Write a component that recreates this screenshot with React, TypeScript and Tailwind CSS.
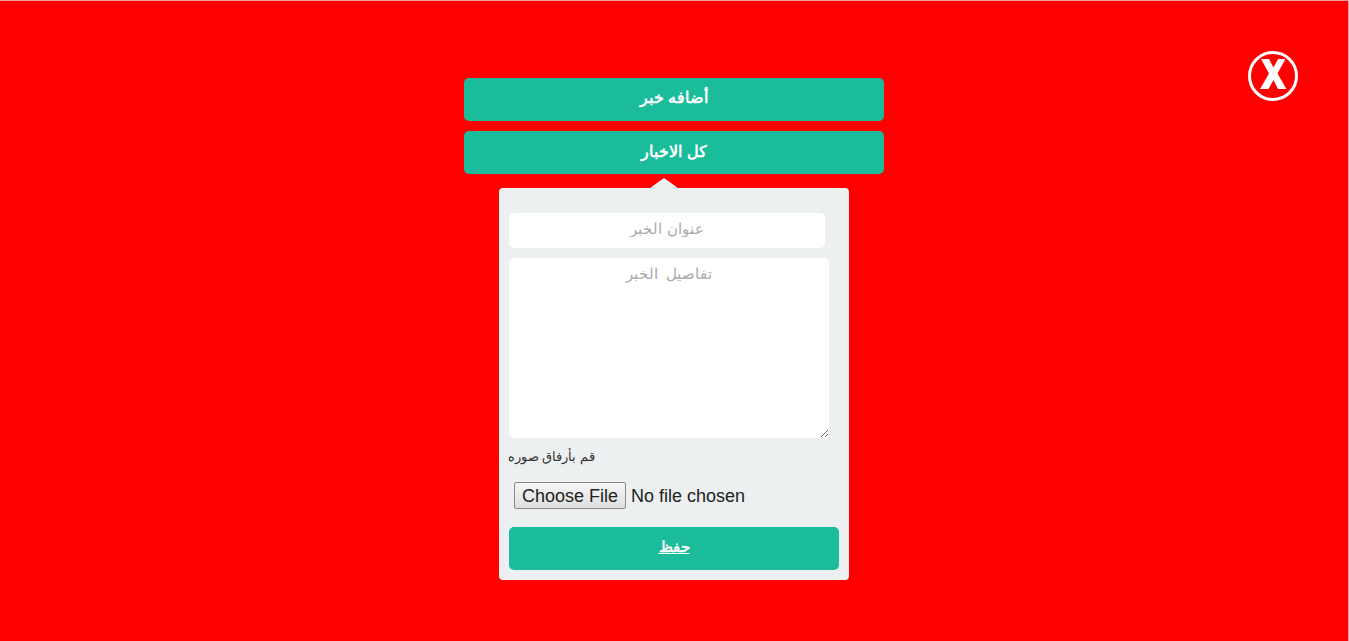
// Red overlay with the add-news form and the close button.
function CloseIcon() {
  return (
    <svg width="50" height="50" viewBox="0 0 50 50" fill="none">
      <circle cx="25" cy="25" r="23.5" stroke="#fff" strokeWidth="3" />
      <path d="M13 8H21L25.5 16.5L30 8H37.5L29.5 22.5L38.5 38H30L25.5 29L20.5 38H12L21 22.5Z" fill="#fff" />
    </svg>
  );
}

export default function App() {
  return (
    <div className="relative h-[641px] overflow-hidden bg-[#ff0000] border-t border-r border-[#f4a0a0] font-['Liberation_Sans',Arial,sans-serif]">
      <button className="absolute left-[1248px] top-[50px]">
        <CloseIcon />
      </button>

      <div className="mx-auto w-[420px] pt-[77px] flex flex-col">
        <button className="h-[43px] pb-[3px] rounded-[5px] bg-[#1abc9c] text-white text-base font-bold">
          أضافه خبر
        </button>
        <button className="mt-[10px] h-[43px] pb-[2px] rounded-[5px] bg-[#1abc9c] text-white text-base font-bold">
          كل الاخبار
        </button>

        <div className="relative mx-auto mt-[14px] w-[350px] h-[392px] rounded-[4px] bg-[#ecf0f1] pt-[25px] px-[10px]">
          <div className="absolute left-[151px] -top-[10px] w-0 h-0 border-x-[14px] border-x-transparent border-b-[10px] border-b-[#ecf0f1]" />
          <input
            placeholder="عنوان الخبر"
            className="block w-[316px] h-[35px] pb-[3px] rounded-[5px] bg-white text-center text-[14.5px] text-[#333] outline-none placeholder:text-[#a9a9a9]"
          />
          <textarea
            placeholder="تفاصيل  الخبر"
            className="block mt-[10px] w-[320px] h-[180px] rounded-[5px] bg-white text-center text-[14.5px] px-1 pt-[6px] text-[#333] outline-none placeholder:text-[#a9a9a9]"
          />
          <p className="mt-[11px] -ml-px w-fit whitespace-nowrap text-[12.5px] leading-4 text-[#333]">قم بأرفاق صوره</p>
          <input
            type="file"
            className="block mt-[17px] ml-[5px] text-[18px] leading-[27px] text-[#222] file:h-[27px] file:px-[7px] file:mr-[5px] file:border file:border-[#8a8a8a] file:rounded-[2px] file:bg-[linear-gradient(#f6f6f6,#dedede)] file:text-[18px] file:text-[#222]"
          />
          <button className="block mt-[17px] w-[330px] h-[43px] pb-[3px] rounded-[5px] bg-[#1abc9c] text-white text-[15px] font-bold underline">
            حفظ
          </button>
        </div>
      </div>
    </div>
  );
}
